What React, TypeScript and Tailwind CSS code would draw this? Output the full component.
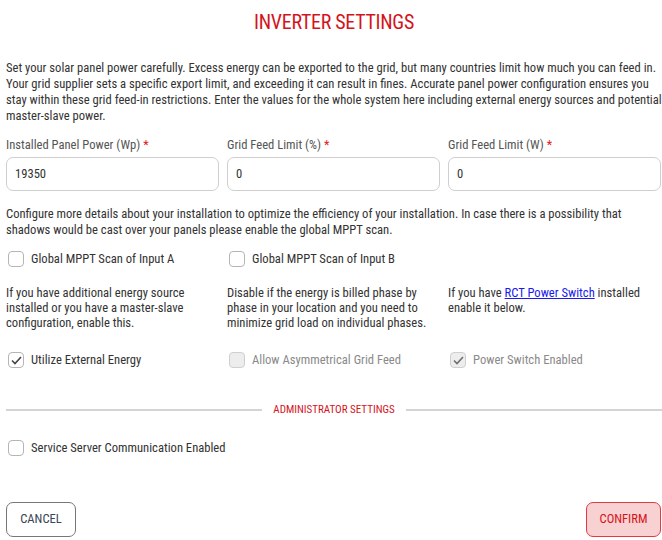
import React from "react";

function Check({ checked, disabled }: { checked?: boolean; disabled?: boolean }) {
  return (
    <span
      className={
        "flex h-[16px] w-[16px] shrink-0 items-center justify-center rounded-[4px] border " +
        (disabled ? "border-[#cfcfcf] bg-[#ededed]" : "border-[#b5b5b5] bg-white")
      }
    >
      {checked && (
        <svg width="11" height="9" viewBox="0 0 11 9" fill="none">
          <path d="M1 4.5 L4 7.5 L10 1" stroke={disabled ? "#6f6f6f" : "#444"} strokeWidth="1.6" />
        </svg>
      )}
    </span>
  );
}

function CheckRow({ label, checked, disabled }: { label: string; checked?: boolean; disabled?: boolean }) {
  return (
    <div className="flex h-[20px] items-center gap-[7px] pl-[2px]">
      <Check checked={checked} disabled={disabled} />
      <span className={"text-[12.6px] " + (disabled ? "text-[#8a8a8a]" : "text-[#333]")}>{label}</span>
    </div>
  );
}

function Field({ label, value }: { label: string; value: string }) {
  return (
    <div className="flex flex-col">
      <div className="h-[16px] text-[12.6px] leading-[16px] text-[#555]">
        {label} <span className="text-[#e02020]">*</span>
      </div>
      <div className="mt-[4px] flex h-[34px] items-center rounded-[7px] border border-[#cfcfcf] px-[8px] text-[12.6px] text-[#333]">
        {value}
      </div>
    </div>
  );
}

export default function App() {
  return (
    <div className="flex h-[540px] w-[662px] flex-col bg-white pl-[6px] font-['Roboto_Condensed',sans-serif] text-[#333]">
      <h1 className="mt-[10px] h-[24px] text-center text-[20px] leading-[24px] tracking-[-0.3px] text-[#d4141c]">INVERTER SETTINGS</h1>
      <p className="mt-[26px] text-[12.6px] leading-[16px]">
        Set your solar panel power carefully. Excess energy can be exported to the grid, but many countries limit how much you can feed in. Your grid supplier sets a specific export limit, and exceeding it can result in fines. Accurate panel power configuration ensures you stay within these grid feed-in restrictions. Enter the values for the whole system here including external energy sources and potential master-slave power.
      </p>
      <div className="mt-[13px] grid grid-cols-3 gap-[8px] pr-[1px]">
        <Field label="Installed Panel Power (Wp)" value="19350" />
        <Field label="Grid Feed Limit (%)" value="0" />
        <Field label="Grid Feed Limit (W)" value="0" />
      </div>
      <p className="mt-[15px] text-[12.6px] leading-[16px]">
        Configure more details about your installation to optimize the efficiency of your installation. In case there is a possibility that shadows would be cast over your panels please enable the global MPPT scan.
      </p>
      <div className="mt-[11px] grid grid-cols-3 gap-[8px] pr-[1px]">
        <CheckRow label="Global MPPT Scan of Input A" />
        <CheckRow label="Global MPPT Scan of Input B" />
        <div />
      </div>
      <div className="mt-[16px] grid grid-cols-3 gap-[8px] pr-[1px] text-[12.6px] leading-[15px]">
        <p>If you have additional energy source installed or you have a master-slave configuration, enable this.</p>
        <p>Disable if the energy is billed phase by phase in your location and you need to minimize grid load on individual phases.</p>
        <p>
          If you have <a className="text-[#1a1aee] underline">RCT Power Switch</a> installed enable it below.
        </p>
      </div>
      <div className="mt-[20px] grid grid-cols-3 gap-[8px] pr-[1px]">
        <CheckRow label="Utilize External Energy" checked />
        <CheckRow label="Allow Asymmetrical Grid Feed" disabled />
        <CheckRow label="Power Switch Enabled" checked disabled />
      </div>
      <div className="mt-[33px] flex h-[14px] items-center">
        <div className="h-[2px] flex-1 bg-[#d4d4d4]" />
        <span className="px-[11px] text-[11px] leading-[14px] text-[#d4141c]">ADMINISTRATOR SETTINGS</span>
        <div className="h-[2px] flex-1 bg-[#d4d4d4]" />
      </div>
      <div className="mt-[21px]">
        <CheckRow label="Service Server Communication Enabled" />
      </div>
      <div className="mb-[3px] mt-auto flex items-center justify-between pr-[1px]">
        <button className="h-[35px] w-[70px] rounded-[7px] border border-[#777] bg-white text-[12.6px] text-[#3a4555]">CANCEL</button>
        <button className="h-[35px] w-[75px] rounded-[7px] border border-[#e23a40] bg-[#f8d2d2] text-[12.6px] text-[#d4141c]">CONFIRM</button>
      </div>
    </div>
  );
}
